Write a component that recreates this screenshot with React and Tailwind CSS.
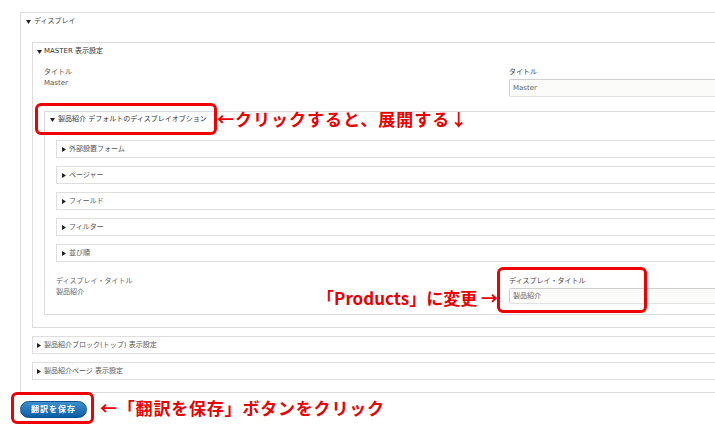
import React from 'react';

const Down = () => (
  <svg width="5" height="4" viewBox="0 0 5 4" className="shrink-0">
    <path d="M0 0h5L2.5 4z" fill="#222" />
  </svg>
);

const Right = () => (
  <svg width="4" height="5" viewBox="0 0 4 5" className="shrink-0">
    <path d="M0 0v5l4-2.5z" fill="#222" />
  </svg>
);

const Closed = ({ label, className = '' }) => (
  <div className={`flex h-[18px] items-center gap-[3px] border border-[#dedede] pl-[5px] text-[#555] ${className}`}>
    <Right />
    <span>{label}</span>
  </div>
);

const Field = ({ label, value, h }) => (
  <div className="flex flex-1 flex-col">
    <div className="h-[11px] leading-[11px] text-[#444]">{label}</div>
    <div
      className={`mt-[1px] ${h} flex items-center rounded-[2px] border border-[#cfcfcf] border-b-[#e2e2e2] bg-[#fbfbf9] pl-[3px] text-[#666]`}
    >
      {value}
    </div>
  </div>
);

export default function App() {
  const subs = ['外部設置フォーム', 'ページャー', 'フィールド', 'フィルター', '並び順'];

  return (
    <div
      className="relative h-[433px] w-[715px] overflow-hidden bg-white text-[7px]"
      style={{ fontFamily: '"DejaVu Sans", "Noto Sans CJK JP", sans-serif' }}
    >
      {/* ディスプレイ */}
      <div className="ml-[20px] mt-[12px] w-[720px] border border-[#dcdcdc] pb-[12px] pl-[11px]">
        <div className="-ml-[6px] flex h-[17px] items-center gap-[3px] text-[#444]">
          <Down />
          <span>ディスプレイ</span>
        </div>

        {/* MASTER */}
        <div className="mt-[12px] border border-[#dcdcdc] pb-[12px] pl-[11px]">
          <div className="-ml-[7px] flex h-[17px] items-center gap-[2px] text-[#333]">
            <Down />
            <span>MASTER 表示設定</span>
          </div>

          <div className="mt-[7px] flex">
            <div className="w-[465px] shrink-0 text-[#555]">
              <div className="h-[11px] leading-[11px]">タイトル</div>
              <div className="h-[11px] leading-[11px]">Master</div>
            </div>
            <Field label="タイトル" value="Master" h="h-[18px]" />
          </div>

          {/* 製品紹介 */}
          <div className="mt-[14px] border border-[#dcdcdc] pb-[10px] pl-[11px]">
            <div className="-ml-[6px] flex h-[15px] items-center gap-[3px] text-[#333]">
              <Down />
              <span>製品紹介 デフォルトのディスプレイオプション</span>
            </div>

            <div className="mt-[13px] flex flex-col gap-[8px]">
              {subs.map((s) => (
                <Closed key={s} label={s} />
              ))}
            </div>

            <div className="mt-[14px] flex">
              <div className="w-[453px] shrink-0 text-[#666]">
                <div className="h-[11px] leading-[11px]">ディスプレイ・タイトル</div>
                <div className="h-[11px] leading-[11px]">製品紹介</div>
              </div>
              <Field label="ディスプレイ・タイトル" value="製品紹介" h="h-[16px]" />
            </div>
          </div>
        </div>

        <Closed label="製品紹介ブロック(トップ) 表示設定" className="mt-[8px] !pl-[4px]" />
        <Closed label="製品紹介ページ 表示設定" className="mt-[8px] !pl-[4px]" />
      </div>

      <button className="ml-[20px] mt-[8px] flex h-[17px] w-[67px] items-center justify-center rounded-full border border-[#0b4f8a] bg-gradient-to-b from-[#3b8fd2] to-[#0d5ca3] text-[8px] font-bold tracking-[1px] text-white">
        翻訳を保存
      </button>

      {/* annotations */}
      <div className="absolute left-[35px] top-[103px] h-[32px] w-[182px] rounded-[6px] border-[3px] border-[#f00000]" />
      <div
        className="absolute left-[217px] top-[108px] text-[17px] font-bold leading-[22px] tracking-[1px] text-[#ea0000]"
        style={{ fontFamily: '"Noto Sans CJK JP", sans-serif' }}
      >
        ←クリックすると、展開する↓
      </div>

      <div className="absolute left-[497px] top-[267px] h-[46px] w-[150px] rounded-[6px] border-[3px] border-[#f00000]" />
      <div
        className="absolute right-[217px] top-[287px] text-[17px] font-bold leading-[22px] text-[#ea0000]"
        style={{ fontFamily: '"Noto Sans CJK JP", sans-serif' }}
      >
        「Products」に変更 →
      </div>

      <div className="absolute left-[11px] top-[392px] h-[32px] w-[83px] rounded-[6px] border-[3px] border-[#f00000]" />
      <div
        className="absolute left-[100px] top-[397px] text-[17px] font-bold leading-[22px] tracking-[0.8px] text-[#ea0000]"
        style={{ fontFamily: '"Noto Sans CJK JP", sans-serif' }}
      >
        ←「翻訳を保存」ボタンをクリック
      </div>
    </div>
  );
}
